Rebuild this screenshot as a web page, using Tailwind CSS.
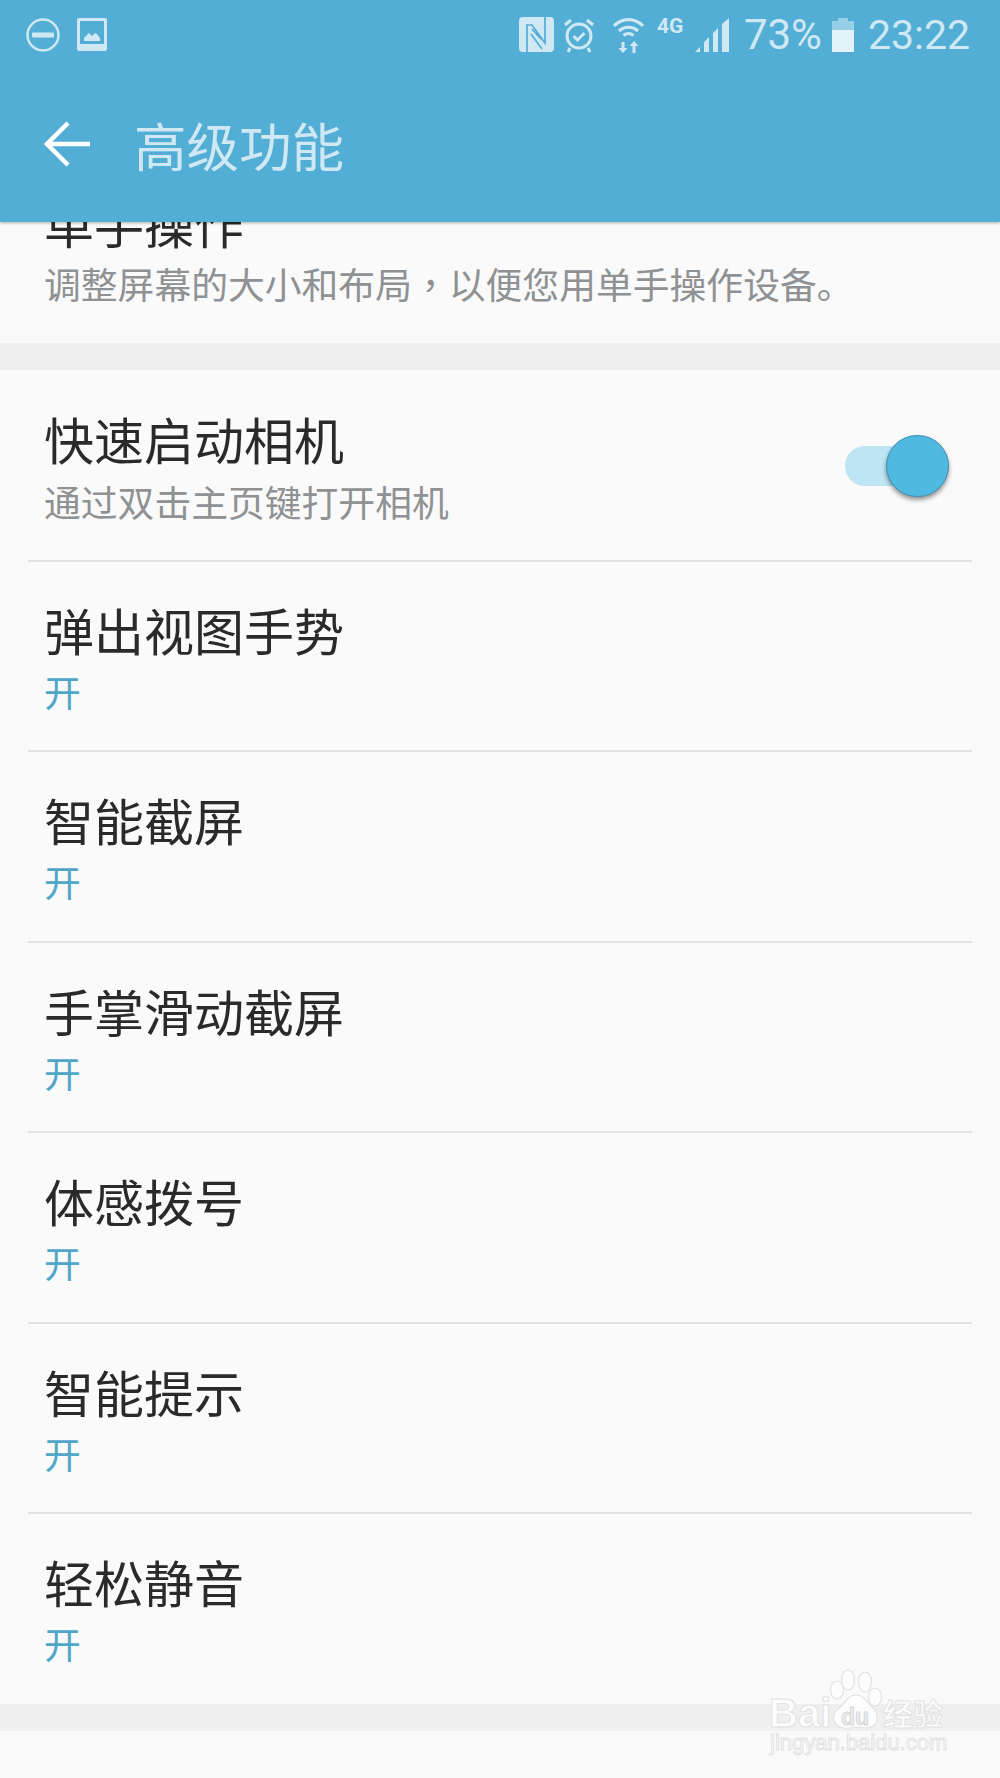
<!DOCTYPE html>
<html lang="zh-CN">
<head>
    <meta charset="UTF-8">
    <title>高级功能</title>
    <script src="https://cdn.jsdelivr.net/npm/@tailwindcss/browser@4"></script>
</head>
<body class="bg-[#fafafa] font-['Noto_Sans_CJK_SC',sans-serif]">
<div class="relative w-[1000px] h-[1778px] overflow-hidden">

    <!-- header -->
    <header class="relative z-10 h-[222px] bg-[#52aed5] shadow-[0_1px_3px_rgba(0,0,0,0.3)]">
        <div class="flex items-center h-[68px] pt-[1px] pl-[26px] pr-[30px] text-[#cfe8f3]">
            <svg class="w-[34px] h-[34px] mr-[17px]" viewBox="0 0 34 34">
                <circle cx="17" cy="17" r="15.5" fill="none" stroke="#cfe8f3" stroke-width="2.5"/>
                <rect x="6" y="14.5" width="22" height="5" rx="1" fill="#cfe8f3"/>
            </svg>
            <svg class="w-[30px] h-[33px]" viewBox="0 0 30 33">
                <path fill="#cfe8f3" fill-rule="evenodd" d="M2 0h26a2 2 0 0 1 2 2v29a2 2 0 0 1-2 2H2a2 2 0 0 1-2-2V2a2 2 0 0 1 2-2zM3 3v23h24V3zM7 23v-3l5-5 3 3 3-3 2 1 3 4v3z"/>
            </svg>

            <div class="ml-auto flex items-center">
                <svg class="w-[35px] h-[35px]" viewBox="0 0 35 35">
                    <rect width="35" height="35" rx="4" fill="#cfe8f3"/>
                    <path fill="none" stroke="#52aed5" stroke-width="1.700" d="M8 35V8h5l13 18V0M12 17l11 15M13 12l9 10"/>
                </svg>
                <svg class="w-[32px] h-[36px] ml-[9px]" viewBox="0 0 32 36" fill="none" stroke="#cfe8f3" stroke-width="3">
                    <circle cx="16" cy="19" r="12"/>
                    <path d="M2 8l6-5M30 8l-6-5M7 31l-2 4M25 31l2 4"/>
                    <path d="M10.500 19l4 4 7-7"/>
                </svg>
                <svg class="w-[31px] h-[36px] ml-[18px]" viewBox="0 0 31 36" fill="none" stroke="#cfe8f3" stroke-width="3.200">
                    <path d="M1 9c8-8.500 21-8.500 29 0M6 14c5.500-5 13.500-5 19 0M10.500 18.500c3-2.500 7-2.500 10 0"/>
                    <path fill="#cfe8f3" stroke="none" d="M8.500 25h3v6h3l-4.500 5-4.500-5h3zM19.500 36v-7h-3l4.500-5 4.500 5h-3v7z"/>
                </svg>
                <div class="w-[28px] ml-[13px] mb-[17px] text-[21px] leading-[17px] font-bold font-['Roboto',sans-serif]">4G</div>
                <svg class="w-[34px] h-[34px] ml-[10px]" viewBox="0 0 34 34" fill="#cfe8f3">
                    <path d="M0 34l5-5v5zM9 34V24l5-5v15zM18 34V15l5-5v24zM27 34V6l7-6v34z"/>
                </svg>
                <div class="ml-[15px] text-[42px] leading-[48px] font-['Roboto',sans-serif]">73%</div>
                <svg class="w-[22px] h-[34px] ml-[10px]" viewBox="0 0 22 34">
                    <path fill="#97cfe6" d="M6 0h10v3h6v9H0V3h6z"/>
                    <rect y="12" width="22" height="22" fill="#e3f2f8"/>
                </svg>
                <div class="ml-[14px] text-[41px] leading-[48px] font-['Roboto',sans-serif]">23:22</div>
            </div>
        </div>
        <div class="flex items-center h-[152px]">
            <svg class="w-[46px] h-[46px] ml-[44px]" viewBox="0 0 46 46" fill="none" stroke="#fff" stroke-width="4.500">
                <path d="M2 23h44M24 2L3 23l21 21"/>
            </svg>
            <h1 class="ml-[44px] text-[52.500px] leading-[60px] text-[#cfe8f3]">高级功能</h1>
        </div>
    </header>

    <!-- clipped row -->
    <section class="h-[121px] overflow-hidden flex flex-col justify-end pb-[38px] pl-[44px]">
        <div class="text-[50px] leading-[60px] text-[#2a2a2a] shrink-0">单手操作</div>
        <div class="mt-[9px] text-[36.800px] leading-[44px] text-[#8f9193] shrink-0 whitespace-nowrap">调整屏幕的大小和布局<span lang="zh-TW" class="font-['Noto_Sans_CJK_TC',sans-serif]">，</span>以便您用单手操作设备。</div>
    </section>

    <div class="h-[27px] bg-[#f0f0f0]"></div>

    <!-- settings list -->
    <section class="h-[1334px]">
        <div class="relative h-[191.500px] mx-[28px] pl-[16px] pt-[38px] border-b-2 border-[#e3e3e3]">
            <div class="text-[50px] leading-[60px] text-[#2a2a2a]">快速启动相机</div>
            <div class="mt-[11px] text-[36.800px] leading-[44px] text-[#8f9193]">通过双击主页键打开相机</div>
            <div class="absolute left-[817px] top-[76px] w-[70px] h-[40px] rounded-full bg-[#bde5f4]"></div>
            <div class="absolute left-[858px] top-[65px] w-[63px] h-[62px] rounded-full bg-[#4fb9e0] border border-[#3f8fb0] shadow-[0_3px_4px_rgba(0,0,0,0.4)]"></div>
        </div>
        <div class="h-[190.500px] mx-[28px] pl-[16px] pt-[37px] border-b-2 border-[#e3e3e3]">
            <div class="text-[50px] leading-[60px] text-[#2a2a2a]">弹出视图手势</div>
            <div class="mt-[10px] text-[36.800px] leading-[44px] text-[#4fa6c8]">开</div>
        </div>
        <div class="h-[190.500px] mx-[28px] pl-[16px] pt-[37px] border-b-2 border-[#e3e3e3]">
            <div class="text-[50px] leading-[60px] text-[#2a2a2a]">智能截屏</div>
            <div class="mt-[10px] text-[36.800px] leading-[44px] text-[#4fa6c8]">开</div>
        </div>
        <div class="h-[190.500px] mx-[28px] pl-[16px] pt-[37px] border-b-2 border-[#e3e3e3]">
            <div class="text-[50px] leading-[60px] text-[#2a2a2a]">手掌滑动截屏</div>
            <div class="mt-[10px] text-[36.800px] leading-[44px] text-[#4fa6c8]">开</div>
        </div>
        <div class="h-[190.500px] mx-[28px] pl-[16px] pt-[37px] border-b-2 border-[#e3e3e3]">
            <div class="text-[50px] leading-[60px] text-[#2a2a2a]">体感拨号</div>
            <div class="mt-[10px] text-[36.800px] leading-[44px] text-[#4fa6c8]">开</div>
        </div>
        <div class="h-[190.500px] mx-[28px] pl-[16px] pt-[37px] border-b-2 border-[#e3e3e3]">
            <div class="text-[50px] leading-[60px] text-[#2a2a2a]">智能提示</div>
            <div class="mt-[10px] text-[36.800px] leading-[44px] text-[#4fa6c8]">开</div>
        </div>
        <div class="h-[190.500px] mx-[28px] pl-[16px] pt-[37px]">
            <div class="text-[50px] leading-[60px] text-[#2a2a2a]">轻松静音</div>
            <div class="mt-[10px] text-[36.800px] leading-[44px] text-[#4fa6c8]">开</div>
        </div>
    </section>

    <div class="h-[27px] bg-[#f0f0f0]"></div>

    <!-- watermark -->
    <div class="absolute left-[767px] top-[1668px] w-[185px] h-[100px] text-[#fdfdfd] [-webkit-text-stroke:1px_#e2e2e2]">
        <svg class="absolute left-[61px] top-[0px] w-[56px] h-[64px]" viewBox="0 0 56 64" fill="#fdfdfd" stroke="#e2e2e2" stroke-width="1.200">
            <ellipse cx="9" cy="22" rx="6.500" ry="9"/>
            <ellipse cx="20" cy="12" rx="6.500" ry="10"/>
            <ellipse cx="37" cy="14" rx="6.500" ry="10"/>
            <ellipse cx="47" cy="29" rx="6.500" ry="9"/>
            <path d="M28 27c8 0 11 8 17 13 6 5 7 19-7 20-4 0-6-1-10-1s-7 2-12 1C4 59 3 46 10 41c7-5 9-14 18-14z"/>
        </svg>
        <div class="absolute left-[2px] top-[28px] text-[40px] leading-[34px] font-bold font-['Liberation_Sans',sans-serif]">Bai</div>
        <div class="absolute left-[74px] top-[36px] text-[23px] leading-[26px] font-bold font-['Liberation_Sans',sans-serif] text-[#ececec] [-webkit-text-stroke:1px_#d8d8d8]">du</div>
        <div class="absolute left-[116px] top-[28px] text-[30px] leading-[32px] font-bold">经验</div>
        <div class="absolute left-[3px] top-[62px] text-[22px] leading-[26px] font-['Liberation_Sans',sans-serif] whitespace-nowrap">jingyan.baidu.com</div>
    </div>
</div>
</body>
</html>
